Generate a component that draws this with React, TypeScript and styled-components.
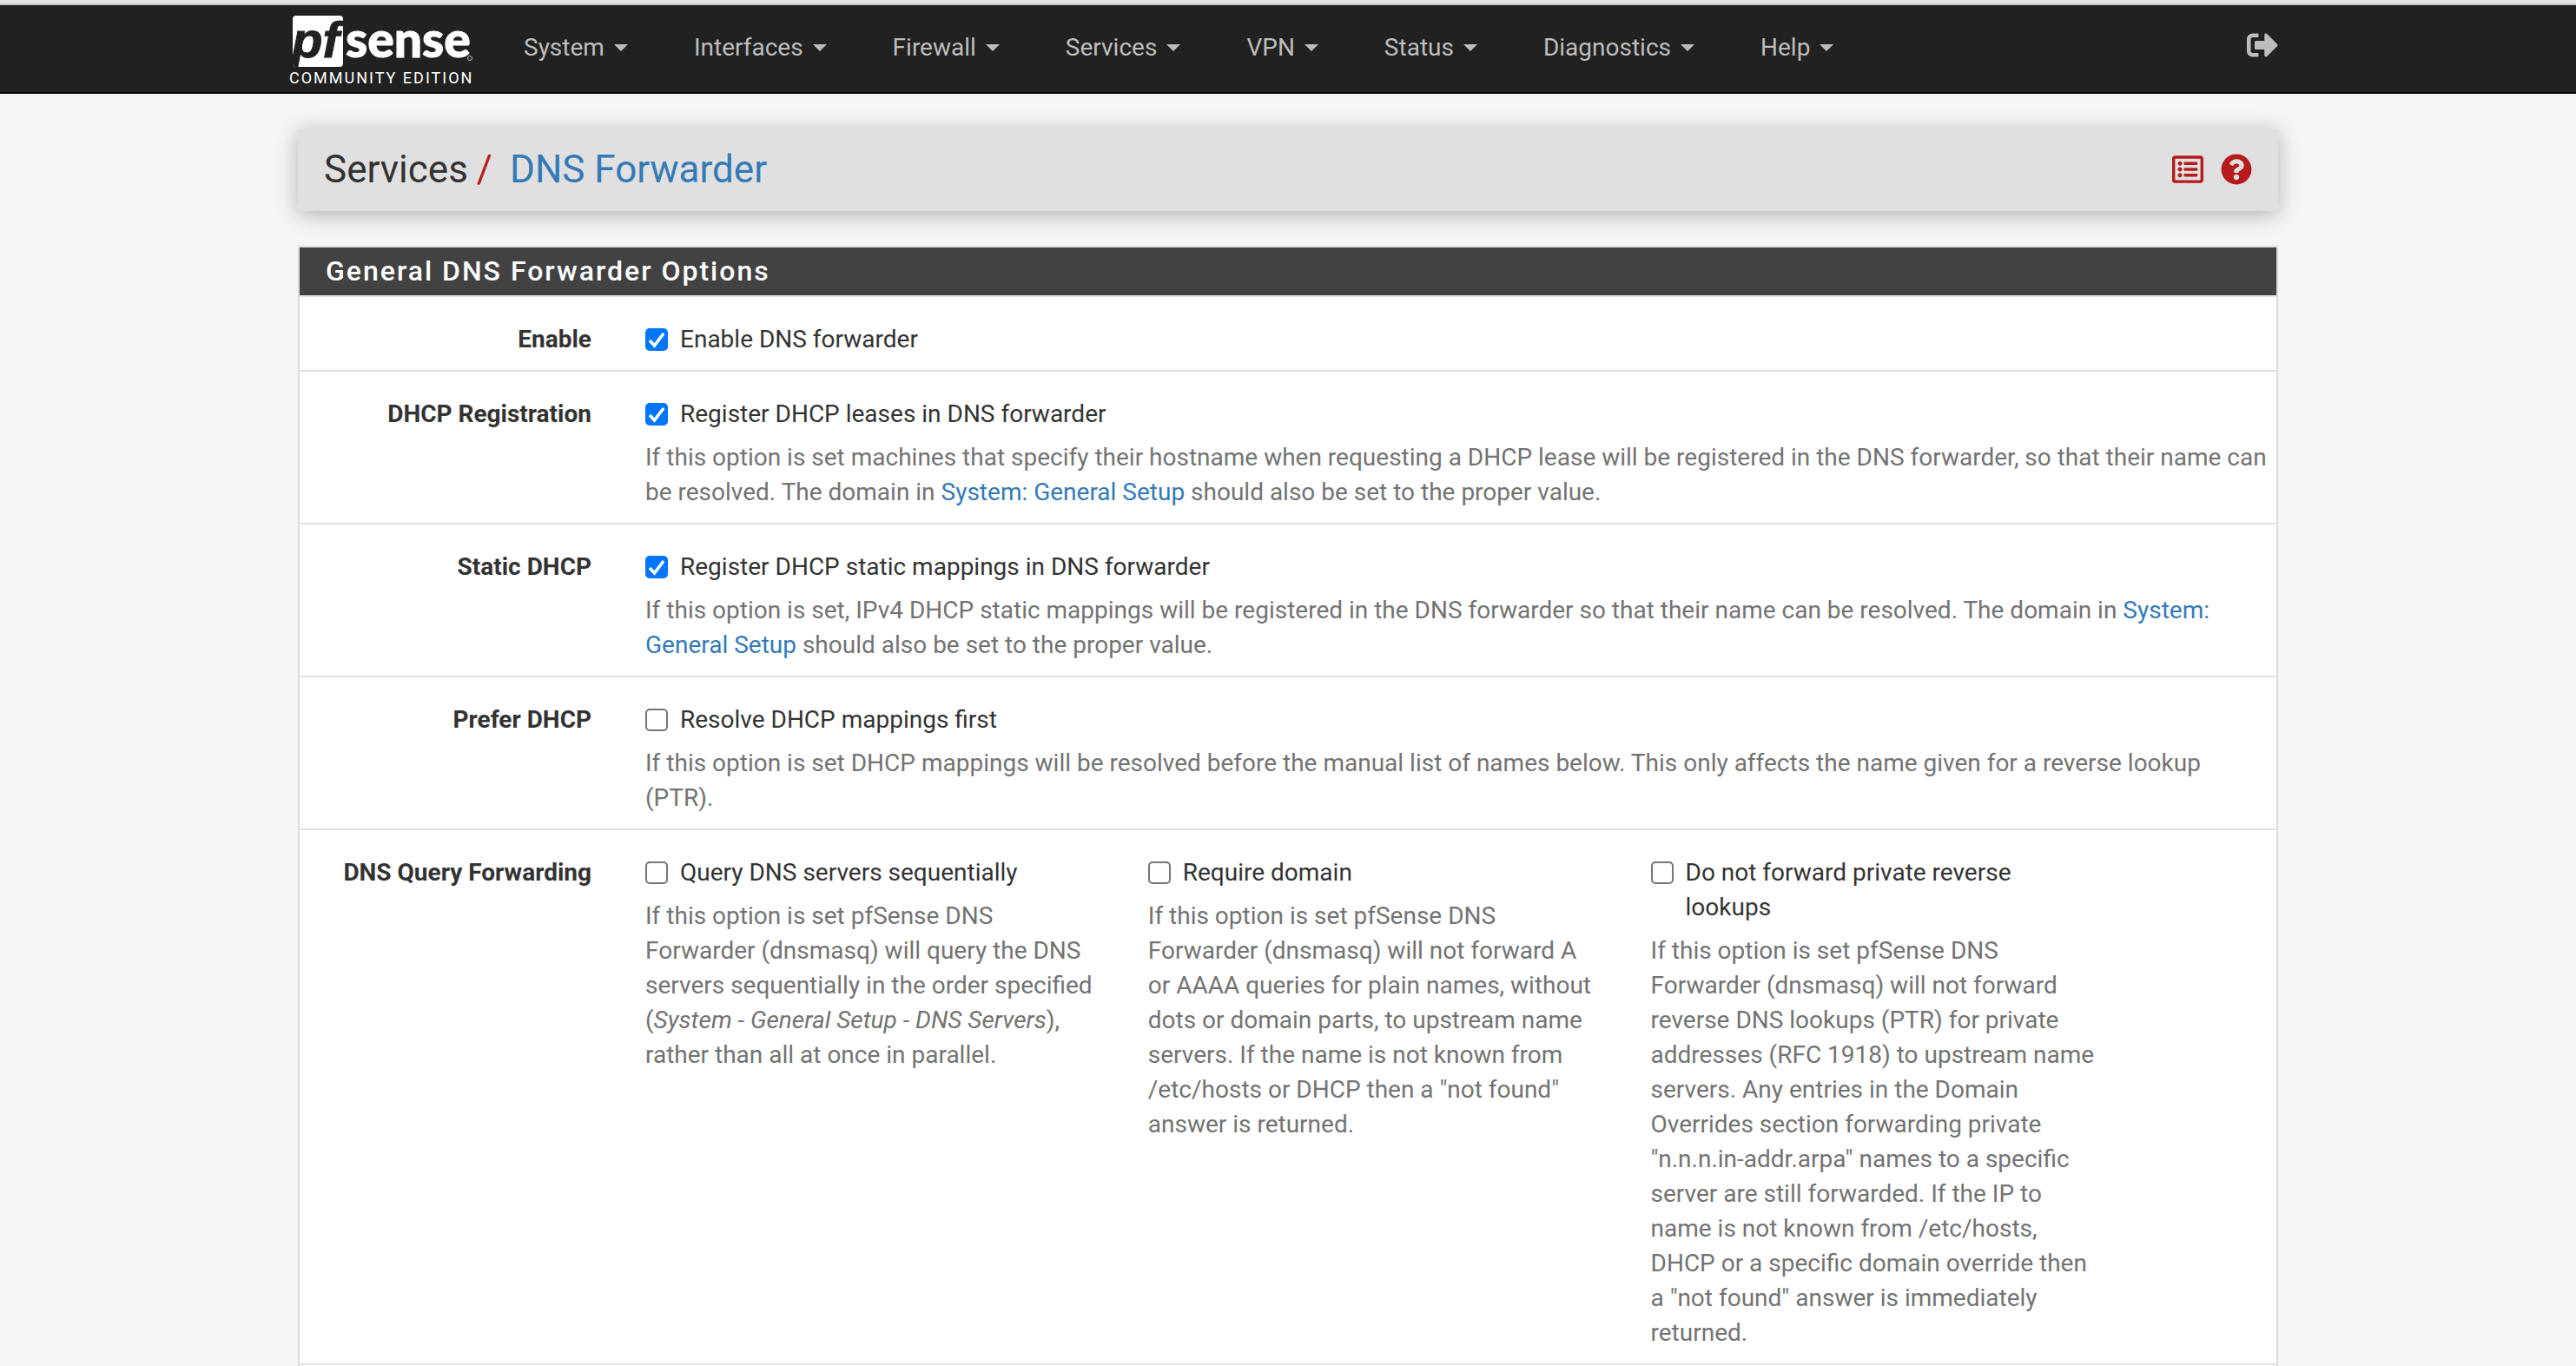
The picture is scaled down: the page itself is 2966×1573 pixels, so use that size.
import React, { useId } from 'react';
import styled, { createGlobalStyle } from 'styled-components';
import { FaQuestionCircle, FaRegListAlt, FaSignOutAlt } from 'react-icons/fa';

const GlobalStyle = createGlobalStyle`
  *, *::before, *::after { box-sizing: border-box; }
  body {
    margin: 0;
    background: #f5f5f5;
    color: #333;
    font-family: Roboto, "Liberation Sans", sans-serif;
    font-size: 28px;
    line-height: 40px;
  }
  a { color: #337ab7; text-decoration: none; }
`;

const Page = styled.div`
  display: flex;
  flex-direction: column;
  height: 100vh;
  overflow: hidden;
`;

const Container = styled.div`
  width: 100%;
  max-width: 2280px;
  margin: 0 auto;
`;

const TopStrip = styled.div`
  flex: none;
  height: 6px;
  background: #e4e4e4;
  border-bottom: 2px solid #c6c8c6;
`;

const Navbar = styled.header`
  flex: none;
  height: 102px;
  background: #212121;
  border-bottom: 2px solid #080808;
`;

const NavInner = styled(Container)`
  display: flex;
  align-items: flex-start;
  height: 100%;
`;

const Brand = styled.a`
  display: flex;
  flex-direction: column;
  width: 222px;
  margin-left: -10px;
  padding-top: 10px;
  color: #fff;
`;

const LogoMark = styled.svg`
  display: block;
  width: 222px;
  height: 64px;
  overflow: visible;
`;

const Edition = styled.span`
  font-size: 18px;
  line-height: 20px;
  letter-spacing: 2px;
  white-space: nowrap;
`;

const Menu = styled.nav`
  display: flex;
  flex: 1;
  gap: 16px;
  margin-left: 18px;
`;

const MenuButton = styled.button`
  display: flex;
  align-items: center;
  gap: 11px;
  height: 98px;
  padding: 0 30px;
  border: 0;
  background: none;
  color: #bdbdbd;
  font: inherit;
`;

const Caret = styled.span`
  border-top: 8px solid currentColor;
  border-left: 8px solid transparent;
  border-right: 8px solid transparent;
`;

const IconLink = styled.a<{ $color: string }>`
  display: flex;
  color: ${(p) => p.$color};
  font-size: 36px;
`;

const Logout = styled(IconLink)`
  height: 92px;
  align-items: center;
`;

const Main = styled(Container).attrs({ as: 'main' })`
  display: flex;
  flex: 1;
  flex-direction: column;
  gap: 40px;
  padding-top: 40px;
`;

const PageHeader = styled.div`
  display: flex;
  align-items: center;
  justify-content: space-between;
  height: 95px;
  padding: 0 30px 1px;
  border-radius: 4px;
  background: #e0e0e0;
  box-shadow: 0 4px 24px rgba(0, 0, 0, 0.28);
`;

const Title = styled.h1`
  margin: 0;
  font-size: 44px;
  font-weight: 400;
  line-height: 48px;
`;

const Slash = styled.span`
  margin: 0 20px 0 10px;
  color: #b71c1c;
`;

const Actions = styled.div`
  display: flex;
  gap: 20px;
`;

const Panel = styled.section`
  flex: 1 0 auto;
  border: 2px solid #ddd;
  border-bottom: 0;
  background: #fff;
`;

const PanelHeading = styled.h2`
  margin: 0;
  padding: 7px 30px 8px;
  border-bottom: 2px solid #e0e0e0;
  background: #424242;
  color: #fff;
  font-size: 32px;
  font-weight: 500;
  line-height: 40px;
  letter-spacing: 2px;
`;

const Row = styled.div`
  display: grid;
  grid-template-columns: 336px 1fr;
  column-gap: 62px;
  padding: 29px 10px 15px 0;
  border-bottom: 2px solid #e0e0e0;
`;

const RowLabel = styled.div`
  font-weight: 700;
  text-align: right;
`;

const Columns = styled.div`
  display: grid;
  grid-template-columns: repeat(3, 4fr) 1fr;
  column-gap: 60px;
  padding-right: 2px;
`;

const CheckLabel = styled.label`
  display: flex;
  align-items: flex-start;
  gap: 14px;
`;

const checkMark =
  "url(\"data:image/svg+xml,%3Csvg xmlns='http://www.w3.org/2000/svg' viewBox='0 0 26 26'%3E%3Cpath d='M5 14l5.500 6L21 6' fill='none' stroke='white' stroke-width='3.600'/%3E%3C/svg%3E\")";

const Checkbox = styled.input`
  flex: none;
  width: 26px;
  height: 26px;
  margin: 7px 0 0;
  appearance: none;
  border: 2px solid #767676;
  border-radius: 5px;
  background: #fff;

  &:checked {
    border: 0;
    background: #0075ff ${checkMark} center / 26px 26px no-repeat;
  }
`;

const Help = styled.p`
  margin: 10px 0 0;
  color: #737373;
`;

function Option({ label, checked, children }: { label: string; checked?: boolean; children?: React.ReactNode }) {
  const id = useId();
  return (
    <div>
      <CheckLabel htmlFor={id}>
        <Checkbox id={id} type="checkbox" defaultChecked={checked} />
        <span>{label}</span>
      </CheckLabel>
      {children && <Help>{children}</Help>}
    </div>
  );
}

function Logo() {
  return (
    <LogoMark viewBox="0 0 222 64" role="img" aria-label="pfSense">
      <defs>
        <clipPath id="tile">
          <rect x="4" y="2" width="58" height="59" rx="4" />
        </clipPath>
      </defs>
      <g clipPath="url(#tile)">
        <rect x="4" y="2" width="58" height="59" fill="#fff" />
        <text
          x="3"
          y="50"
          fill="#212121"
          stroke="#212121"
          fontFamily="Liberation Sans"
          fontSize="58"
          fontWeight="700"
          fontStyle="italic"
        >
          pf
        </text>
      </g>
      <text x="65" y="50" fill="#fff" stroke="#fff" fontFamily="Lato" fontSize="57" fontWeight="900">
        sense
      </text>
      <circle cx="208" cy="51" r="2.500" fill="none" stroke="#bbb" strokeWidth="1" />
    </LogoMark>
  );
}

const menus = ['System', 'Interfaces', 'Firewall', 'Services', 'VPN', 'Status', 'Diagnostics', 'Help'];

export default function App() {
  return (
    <Page>
      <GlobalStyle />
      <TopStrip />
      <Navbar>
        <NavInner>
          <Brand href="#">
            <Logo />
            <Edition>COMMUNITY EDITION</Edition>
          </Brand>
          <Menu>
            {menus.map((name) => (
              <MenuButton key={name} type="button">
                {name}
                <Caret />
              </MenuButton>
            ))}
          </Menu>
          <Logout href="#" $color="#bdbdbd" aria-label="Logout">
            <FaSignOutAlt />
          </Logout>
        </NavInner>
      </Navbar>
      <Main>
        <PageHeader>
          <Title>
            Services<Slash>/</Slash>
            <a href="#">DNS Forwarder</a>
          </Title>
          <Actions>
            <IconLink href="#" $color="#b71c1c" aria-label="Related log entries">
              <FaRegListAlt />
            </IconLink>
            <IconLink href="#" $color="#b71c1c" aria-label="Help for this page">
              <FaQuestionCircle />
            </IconLink>
          </Actions>
        </PageHeader>
        <Panel>
          <PanelHeading>General DNS Forwarder Options</PanelHeading>
          <Row>
            <RowLabel>Enable</RowLabel>
            <Option label="Enable DNS forwarder" checked />
          </Row>
          <Row>
            <RowLabel>DHCP Registration</RowLabel>
            <Option label="Register DHCP leases in DNS forwarder" checked>
              If this option is set machines that specify their hostname when requesting a DHCP lease will be
              registered in the DNS forwarder, so that their name can be resolved. The domain in{' '}
              <a href="#">System: General Setup</a> should also be set to the proper value.
            </Option>
          </Row>
          <Row>
            <RowLabel>Static DHCP</RowLabel>
            <Option label="Register DHCP static mappings in DNS forwarder" checked>
              If this option is set, IPv4 DHCP static mappings will be registered in the DNS forwarder so that
              their name can be resolved. The domain in <a href="#">System: General Setup</a> should also be set
              to the proper value.
            </Option>
          </Row>
          <Row>
            <RowLabel>Prefer DHCP</RowLabel>
            <Option label="Resolve DHCP mappings first">
              If this option is set DHCP mappings will be resolved before the manual list of names below. This
              only affects the name given for a reverse lookup (PTR).
            </Option>
          </Row>
          <Row>
            <RowLabel>DNS Query Forwarding</RowLabel>
            <Columns>
              <Option label="Query DNS servers sequentially">
                If this option is set pfSense DNS Forwarder (dnsmasq) will query the DNS servers sequentially in
                the order specified (<i>System - General Setup - DNS Servers</i>), rather than all at once in
                parallel.
              </Option>
              <Option label="Require domain">
                If this option is set pfSense DNS Forwarder (dnsmasq) will not forward A or AAAA queries for
                plain names, without dots or domain parts, to upstream name servers. If the name is not known
                from /etc/hosts or DHCP then a "not found" answer is returned.
              </Option>
              <Option label="Do not forward private reverse lookups">
                If this option is set pfSense DNS Forwarder (dnsmasq) will not forward reverse DNS lookups (PTR)
                for private addresses (RFC 1918) to upstream name servers. Any entries in the Domain Overrides
                section forwarding private "n.n.n.in-addr.arpa" names to a specific server are still forwarded.
                If the IP to name is not known from /etc/hosts, DHCP or a specific domain override then a "not
                found" answer is immediately returned.
              </Option>
            </Columns>
          </Row>
        </Panel>
      </Main>
    </Page>
  );
}
